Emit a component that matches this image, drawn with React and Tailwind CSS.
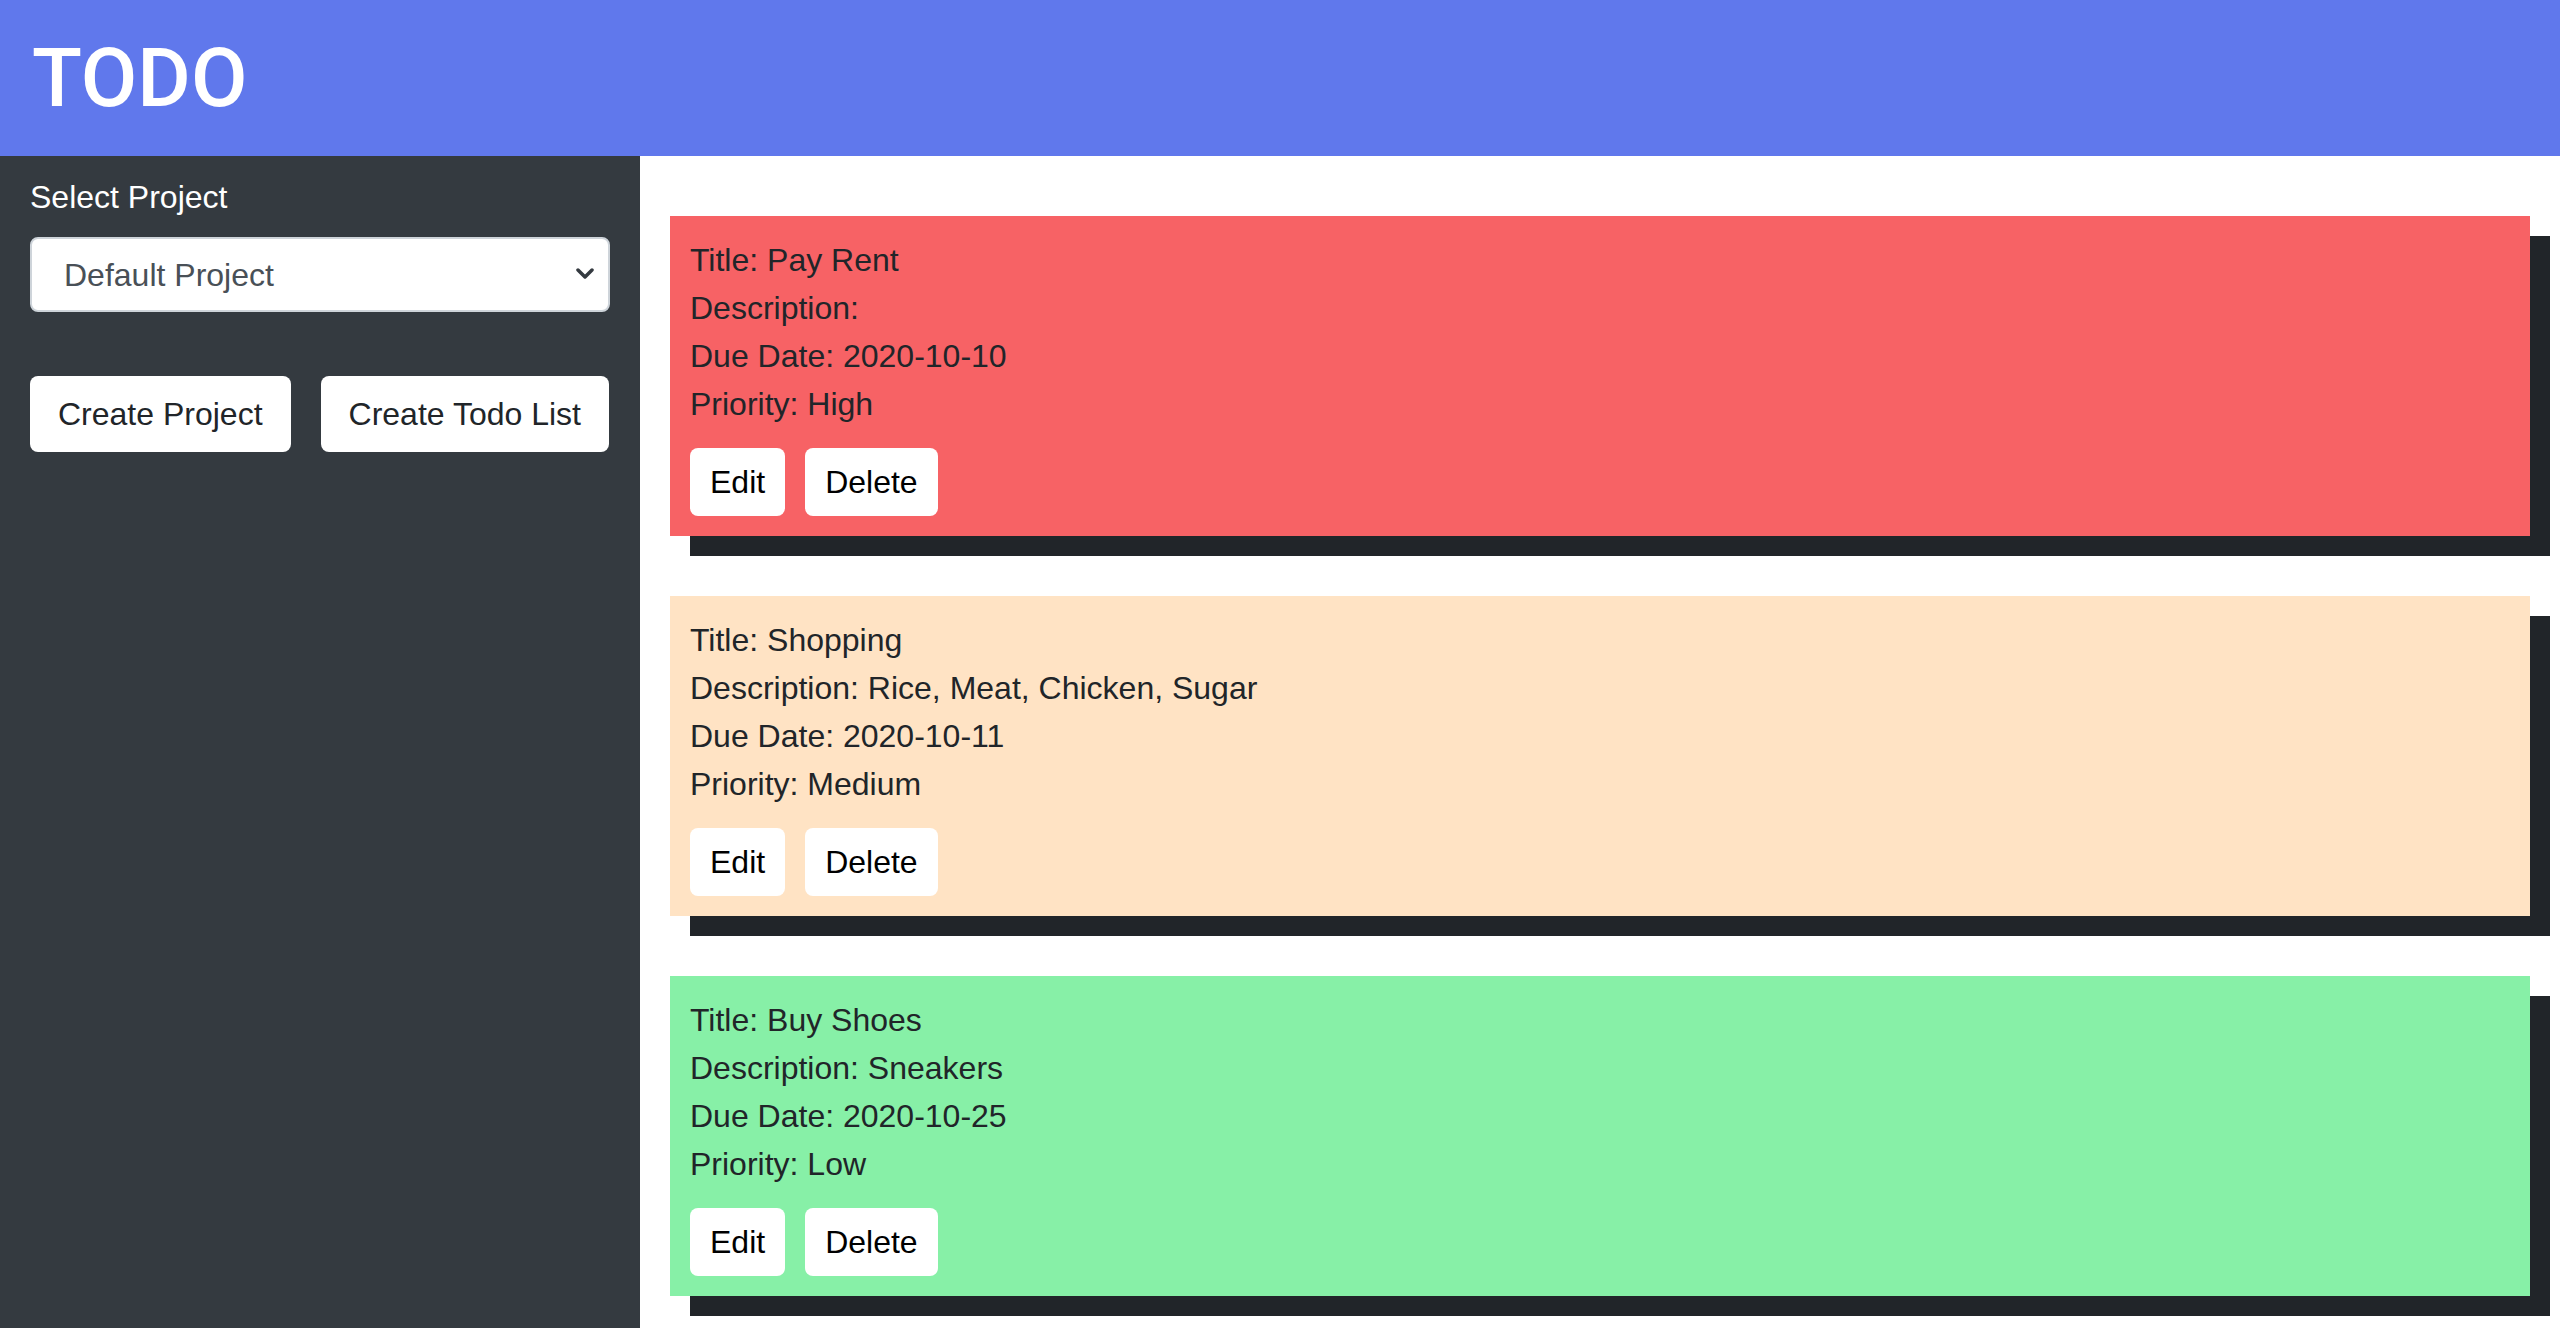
import React from "react";

//? data
const todos = [
  { title: "Pay Rent", description: "", due: "2020-10-10", priority: "High", bg: "bg-[#f76265]" },
  { title: "Shopping", description: "Rice, Meat, Chicken, Sugar", due: "2020-10-11", priority: "Medium", bg: "bg-[#ffe3c4]" },
  { title: "Buy Shoes", description: "Sneakers", due: "2020-10-25", priority: "Low", bg: "bg-[#87f0a7]" },
];

const TodoCard = ({ todo }) => {
  return (
    <div className={`${todo.bg} shadow-[20px_20px_0_#212529] mb-[60px] p-[20px] text-[#212529]`}>
      <p className="text-[32px] leading-[48px]">Title: {todo.title}</p>
      <p className="text-[32px] leading-[48px]">Description: {todo.description}</p>
      <p className="text-[32px] leading-[48px]">Due Date: {todo.due}</p>
      <p className="text-[32px] leading-[48px]">Priority: {todo.priority}</p>
      <div className="mt-[20px] flex flex-row gap-[20px]">
        <button className="bg-white rounded-[8px] px-[20px] py-[10px] text-[32px] leading-[48px] text-black">
          Edit
        </button>
        <button className="bg-white rounded-[8px] px-[20px] py-[10px] text-[32px] leading-[48px] text-black">
          Delete
        </button>
      </div>
    </div>
  );
};

const App = () => {
  return (
    <div className="h-screen flex flex-col overflow-hidden font-['Liberation_Sans',Arial,sans-serif]">
      <header className="h-[156px] shrink-0 bg-[#6078ec] flex items-center pl-[32px]">
        <h1 className="text-white text-[82px] leading-none font-medium font-[Roboto,sans-serif]">TODO</h1>
      </header>
      <div className="flex flex-row flex-1 min-h-0">
        <aside className="w-[640px] shrink-0 bg-[#343a40] px-[30px] pt-[17px]">
          <label className="block text-white text-[32px] leading-[48px] mb-[16px]">Select Project</label>
          <div className="relative">
            <select className="appearance-none w-full h-[75px] bg-white border-2 border-[#ced4da] rounded-[8px] pl-[32px] text-[32px] text-[#495057] outline-none">
              <option>Default Project</option>
            </select>
            <svg
              className="absolute right-[16px] top-[30px] pointer-events-none"
              width="18"
              height="14"
              viewBox="0 0 18 14"
              fill="none"
            >
              <path d="M2 3l7 7 7-7" stroke="#343a40" strokeWidth="3.5" strokeLinecap="round" strokeLinejoin="round" />
            </svg>
          </div>
          <div className="mt-[64px] flex flex-row gap-[30px]">
            <button className="bg-white rounded-[8px] h-[76px] px-[28px] text-[32px] text-[#212529]">
              Create Project
            </button>
            <button className="bg-white rounded-[8px] h-[76px] px-[28px] text-[32px] text-[#212529]">
              Create Todo List
            </button>
          </div>
        </aside>
        <main className="flex-1 bg-white pt-[60px] px-[30px]">
          {todos.map((todo) => (
            <TodoCard key={todo.title} todo={todo} />
          ))}
        </main>
      </div>
    </div>
  );
};

export default App;
